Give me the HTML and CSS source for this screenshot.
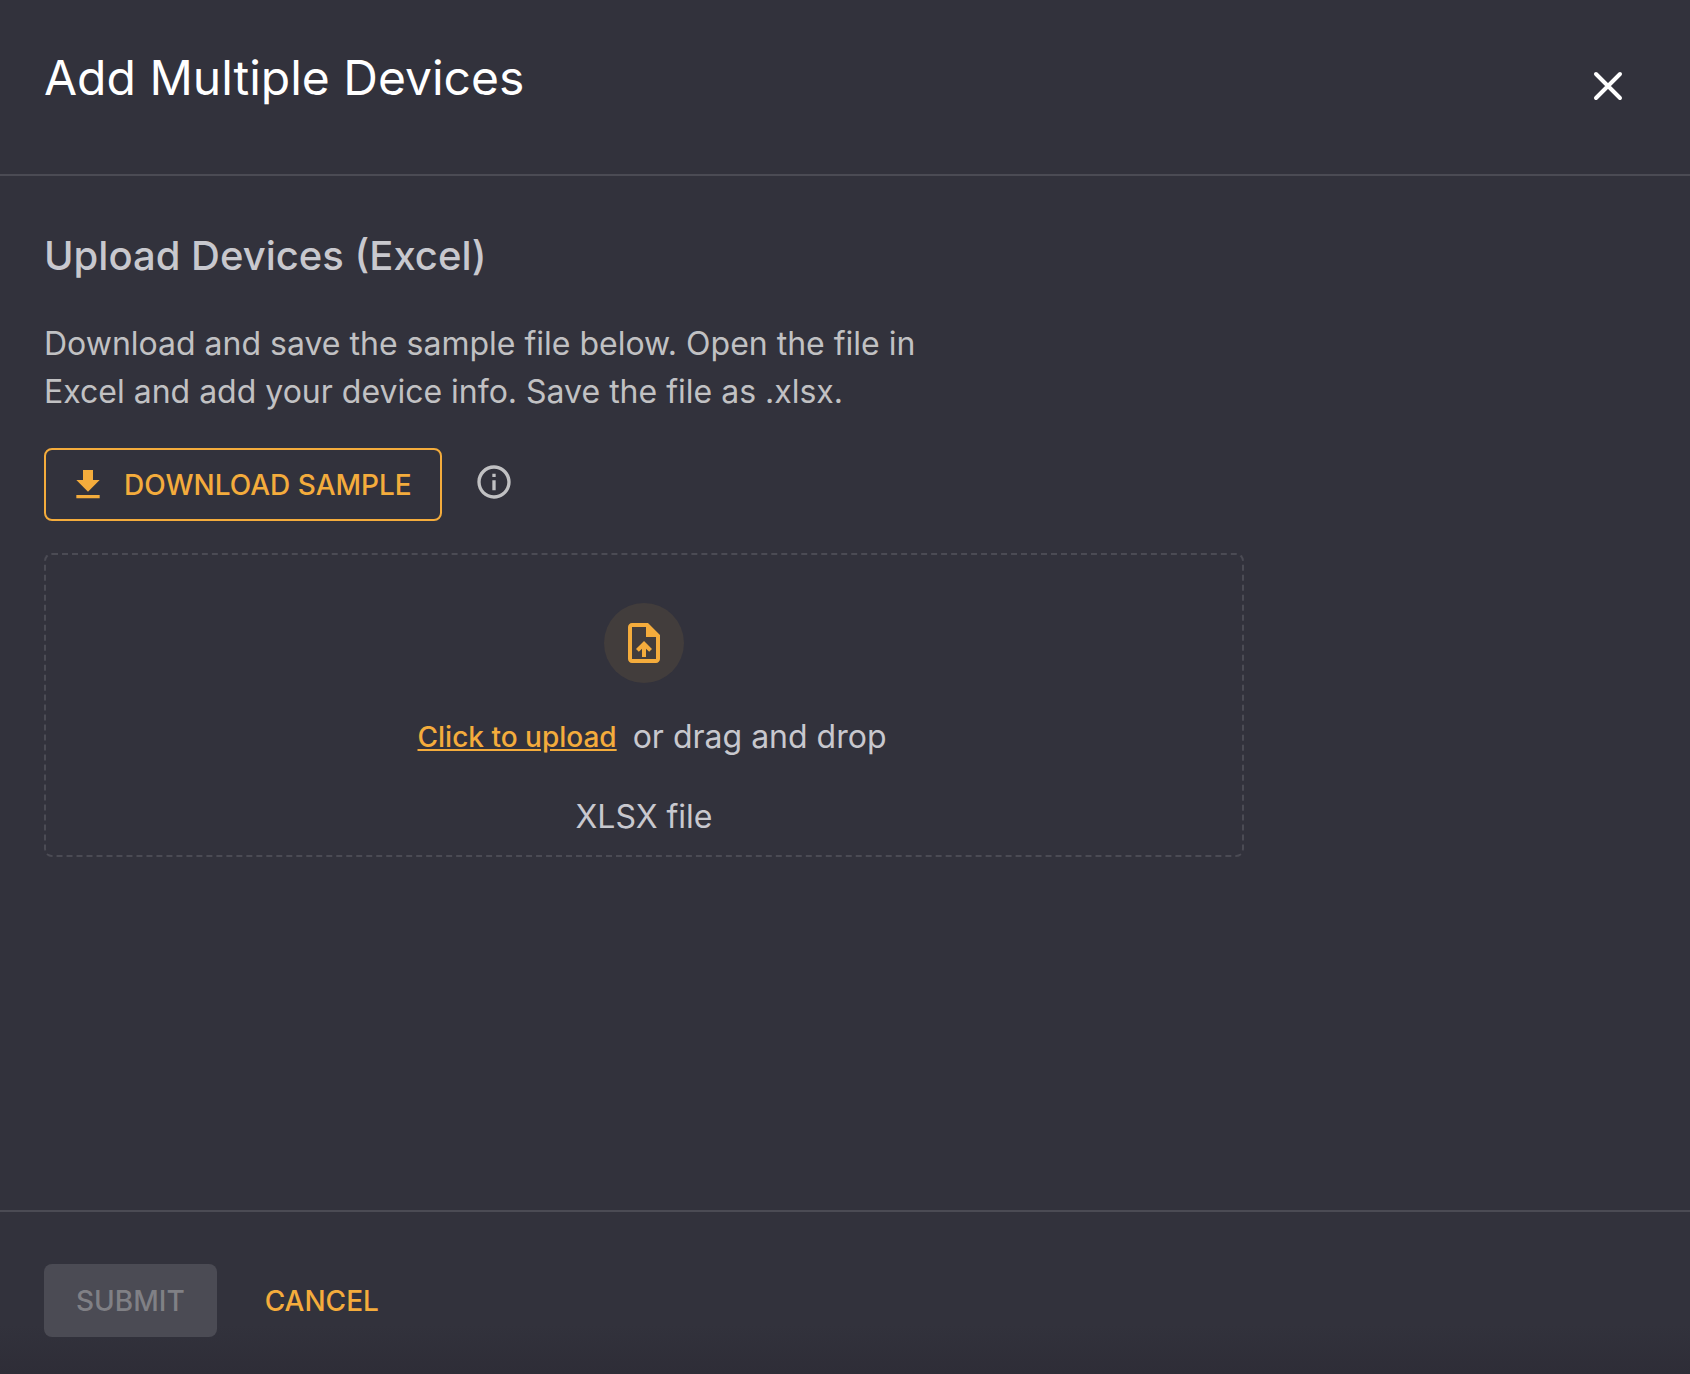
FILE: index.html
```html
<!DOCTYPE html>
<html lang="en">
<head>
<meta charset="utf-8">
<meta name="viewport" content="width=device-width, initial-scale=1">
<title>Add Multiple Devices</title>
<link rel="stylesheet" href="styles.css">
</head>
<body>
<div class="dialog" role="dialog" aria-labelledby="dialog-title">
  <header class="dialog-header">
    <h1 class="dialog-title" id="dialog-title">Add Multiple Devices</h1>
    <button class="icon-button" type="button" aria-label="Close">
      <svg class="close-icon" viewBox="0 0 48 48" aria-hidden="true"><path d="M12 12 36 36M36 12 12 36"/></svg>
    </button>
  </header>
  <main class="dialog-body">
    <h2 class="section-title">Upload Devices (Excel)</h2>
    <p class="instructions">Download and save the sample file below. Open the file in Excel and add your device info. Save the file as .xlsx.</p>
    <div class="sample-row">
      <button class="button button-outlined" type="button">
        <svg class="icon" viewBox="0 0 24 24" aria-hidden="true"><path d="M19 9h-4V3H9v6H5l7 7 7-7zM5 18v2h14v-2H5z"/></svg>
        Download Sample
      </button>
      <button class="icon-button info-button" type="button" aria-label="File information">
        <svg class="icon" viewBox="0 0 24 24" aria-hidden="true"><path d="M11 7h2v2h-2zm0 4h2v6h-2zm1-9C6.480 2 2 6.480 2 12s4.480 10 10 10 10-4.480 10-10S17.520 2 12 2zm0 18c-4.410 0-8-3.590-8-8s3.590-8 8-8 8 3.590 8 8-3.590 8-8 8z"/></svg>
      </button>
    </div>
    <section class="dropzone" aria-label="File upload">
      <span class="upload-badge">
        <svg class="upload-icon" viewBox="0 0 24 24" aria-hidden="true"><path d="M14 2H6c-1.100 0-1.990.9-1.990 2L4 20c0 1.100.89 2 1.990 2H18c1.100 0 2-.9 2-2V8l-6-6zm4 18H6V4h7v5h5v11zM8 15.010l1.410 1.410L11 14.840V19h2v-4.160l1.590 1.590L16 15.010 12.010 11 8 15.010z"/></svg>
      </span>
      <p class="upload-prompt"><a class="upload-link" href="#">Click to upload</a><span>or drag and drop</span></p>
      <p class="file-type">XLSX file</p>
    </section>
  </main>
  <footer class="dialog-footer">
    <button class="button button-filled" type="submit" disabled>Submit</button>
    <button class="button button-text" type="button">Cancel</button>
  </footer>
</div>
</body>
</html>
```
FILE: styles.css
```css
:root {
  --surface: #32323c;
  --line: #4b4b54;
  --accent: #f4ac3c;
  --text: #c8c8ce;
  --text-muted: #c1c1c3;
}

* {
  box-sizing: border-box;
}

body {
  margin: 0;
  background: var(--surface);
  color: var(--text);
  font-family: Inter, "Liberation Sans", sans-serif;
  font-size: 32px;
  line-height: 48px;
}

h1, h2, p {
  margin: 0;
}

button {
  font-family: inherit;
  cursor: pointer;
}

.dialog {
  display: flex;
  flex-direction: column;
  min-height: 100vh;
}

.dialog-header {
  display: flex;
  align-items: flex-start;
  justify-content: space-between;
  padding: 46px 44px 48px;
  border-bottom: 2px solid var(--line);
}

.dialog-title {
  color: #fff;
  font-size: 48px;
  font-weight: 400;
  line-height: 64px;
}

.icon-button {
  display: flex;
  padding: 0;
  border: 0;
  background: none;
  color: inherit;
}

.dialog-header .icon-button {
  padding: 16px 14px;
}

.close-icon {
  width: 48px;
  height: 48px;
  fill: none;
  stroke: #fff;
  stroke-width: 4;
  stroke-linecap: round;
}

.dialog-body {
  flex: 1;
  padding: 56px 44px;
}

.section-title {
  font-size: 40px;
  font-weight: 500;
  line-height: 48px;
}

.instructions {
  max-width: 900px;
  margin-top: 40px;
  color: var(--text-muted);
}

.sample-row {
  display: flex;
  gap: 32px;
  margin-top: 32px;
}

.button {
  display: flex;
  align-items: center;
  gap: 16px;
  height: 73px;
  padding: 0 32px;
  border: 0;
  border-radius: 8px;
  background: none;
  color: var(--accent);
  font-size: 28px;
  font-weight: 500;
  text-transform: uppercase;
}

.button-outlined {
  padding: 0 28px 0 22px;
  border: 2px solid var(--accent);
}

.icon {
  width: 40px;
  height: 40px;
  fill: currentColor;
}

.info-button {
  align-self: flex-start;
  padding-top: 14px;
  color: var(--text-muted);
}

.dropzone {
  display: flex;
  flex-direction: column;
  align-items: center;
  max-width: 1200px;
  margin-top: 32px;
  padding: 48px 16px 14px;
  border: 2px dashed var(--line);
  border-radius: 8px;
}

.upload-badge {
  display: flex;
  padding: 16px;
  border-radius: 50%;
  background: #423d3c;
}

.upload-icon {
  width: 48px;
  height: 48px;
  fill: var(--accent);
}

.upload-prompt {
  display: flex;
  align-items: center;
  margin-top: 30px;
}

.upload-link {
  padding: 0 16px;
  color: var(--accent);
  font-size: 28px;
  font-weight: 500;
}

.file-type {
  margin-top: 32px;
}

.dialog-footer {
  display: flex;
  gap: 16px;
  padding: 52px 44px 37px;
  border-top: 2px solid var(--line);
  background: linear-gradient(var(--surface) 70%, #2e2d37);
}

.button-filled {
  background: #4b4b54;
  color: #808085;
  cursor: default;
}
```
